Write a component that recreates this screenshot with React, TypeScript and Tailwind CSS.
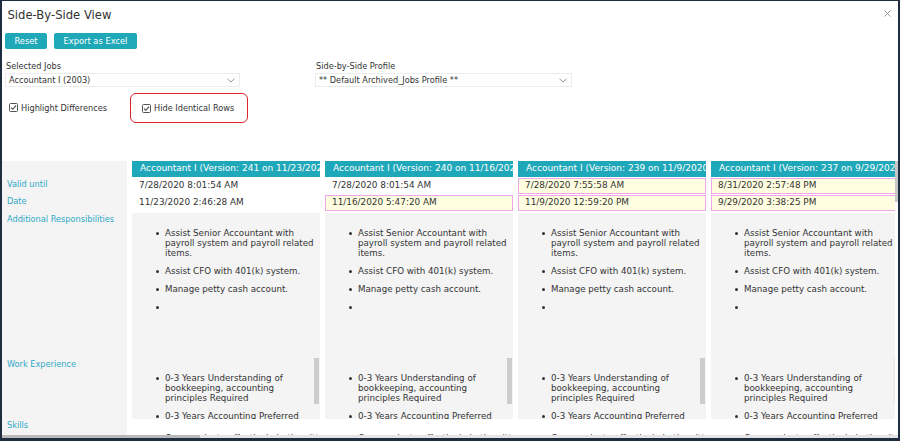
import React from "react";

type Cell = { text: string; diff: boolean };
type Column = { title: string; valid: Cell; date: Cell };

const columns: Column[] = [
  {
    title: "Accountant I (Version: 241 on 11/23/2020)",
    valid: { text: "7/28/2020 8:01:54 AM", diff: false },
    date: { text: "11/23/2020 2:46:28 AM", diff: false },
  },
  {
    title: "Accountant I (Version: 240 on 11/16/2020)",
    valid: { text: "7/28/2020 8:01:54 AM", diff: false },
    date: { text: "11/16/2020 5:47:20 AM", diff: true },
  },
  {
    title: "Accountant I (Version: 239 on 11/9/2020)",
    valid: { text: "7/28/2020 7:55:58 AM", diff: true },
    date: { text: "11/9/2020 12:59:20 PM", diff: true },
  },
  {
    title: "Accountant I (Version: 237 on 9/29/2020)",
    valid: { text: "8/31/2020 2:57:48 PM", diff: true },
    date: { text: "9/29/2020 3:38:25 PM", diff: true },
  },
];

// each item is split into its display lines
const responsibilities = [
  ["Assist Senior Accountant with", "payroll system and payroll related", "items."],
  ["Assist CFO with 401(k) system."],
  ["Manage petty cash account."],
  [""],
];

const experience = [
  ["0-3 Years Understanding of", "bookkeeping, accounting", "principles Required"],
  ["0-3 Years Accounting Preferred"],
];

const skills = [["Communicate effectively both written"]];

function Chevron() {
  return (
    <svg width="8" height="5" viewBox="0 0 8 5" className="shrink-0">
      <path d="M0.5 0.8 L4 4 L7.5 0.8" fill="none" stroke="#8a8a8a" strokeWidth="0.9" />
    </svg>
  );
}

function CheckBox() {
  return (
    <svg width="9" height="9" viewBox="0 0 9 9" className="shrink-0">
      <rect x="0.5" y="0.5" width="8" height="8" rx="1" fill="#fff" stroke="#555" strokeWidth="1" />
      <path d="M2 4.6 L3.8 6.3 L7 2.6" fill="none" stroke="#444" strokeWidth="1.1" />
    </svg>
  );
}

function Bullets({ items, top }: { items: string[][]; top: string }) {
  return (
    <ul className={`flex flex-col gap-[8px] ${top}`}>
      {items.map((lines, i) => (
        <li key={i} className="flex items-start text-[8.7px] leading-[10px] text-[#333]">
          <span className="ml-[24px] mt-[4px] h-[2.5px] w-[2.5px] shrink-0 rounded-full bg-[#333]" />
          <span className="ml-[6.5px] flex min-h-[10px] flex-col whitespace-nowrap">
            {lines.map((line, j) => (
              <span key={j}>{line}</span>
            ))}
          </span>
        </li>
      ))}
    </ul>
  );
}

function ValueRow({ cell }: { cell: Cell }) {
  return (
    <div
      className={`mt-[1px] flex h-[16px] shrink-0 items-center whitespace-nowrap text-[8.9px] ${
        cell.diff ? "border border-[#f2a6ea] bg-[#fffee0] pl-[6px]" : "bg-white pl-[7px]"
      }`}
    >
      {cell.text}
    </div>
  );
}

function VersionColumn({ column, thumb }: { column: Column; thumb: string }) {
  return (
    <div className="flex w-[188px] shrink-0 flex-col text-[#333]">
      <div className="flex h-[16px] shrink-0 items-center overflow-hidden whitespace-nowrap bg-[#1fa8b9] pl-[8px] text-[9px] text-white">
        {column.title}
      </div>
      <ValueRow cell={column.valid} />
      <ValueRow cell={column.date} />
      <div className="mt-[2px] shrink-0 bg-[#f4f4f4]">
        <div className="h-[145px] overflow-hidden">
          <Bullets items={responsibilities} top="pt-[15px]" />
        </div>
        <div className="relative h-[61px] overflow-hidden">
          <Bullets items={experience} top="pt-[15px]" />
          <div className={`absolute right-[1px] top-0 h-[46px] w-[5px] ${thumb}`} />
        </div>
      </div>
      <div className="min-h-0 flex-1 overflow-hidden bg-white">
        <Bullets items={skills} top="pt-[14px]" />
      </div>
    </div>
  );
}

export default function App() {
  return (
    <div className="h-[441px] w-[900px] overflow-hidden bg-[#202d40] pb-[3px] pl-[2px] pr-[2px] pt-[1px] font-['DejaVu_Sans',Verdana,sans-serif] text-[8.2px]">
      <div className="flex h-full w-full flex-col bg-white">
        {/* top section */}
        <div className="relative h-[160px] shrink-0 pl-[3px] text-[#333]">
          <div className="h-[22px] pl-[2.5px] pt-[7px] text-[11.6px] leading-[14px] text-[#333]">
            Side-By-Side View
          </div>
          <button
            type="button"
            className="absolute right-[6px] top-[8px] flex h-[9px] w-[9px] items-center justify-center"
          >
            <svg width="7" height="7" viewBox="0 0 7 7">
              <path d="M0.5 0.5 L6.5 6.5 M6.5 0.5 L0.5 6.5" stroke="#8a8a8a" strokeWidth="0.9" />
            </svg>
          </button>
          <div className="mt-[10px] flex gap-[7px]">
            <button type="button" className="h-[16px] w-[42px] rounded-[2px] bg-[#1fa8b7] text-[8.3px] text-white">
              Reset
            </button>
            <button type="button" className="h-[16px] w-[83px] rounded-[2px] bg-[#1fa8b7] text-[8.3px] text-white">
              Export as Excel
            </button>
          </div>
          <div className="mt-[11px] flex">
            <div className="w-[310px]">
              <div className="h-[13px] pl-[1px] leading-[13px]">Selected Jobs</div>
              <div className="flex h-[14px] w-[235px] items-center justify-between border border-[#ececec] pl-[3px] pr-[4px]">
                <span>Accountant I (2003)</span>
                <Chevron />
              </div>
            </div>
            <div>
              <div className="h-[13px] pl-[1px] leading-[13px]">Side-by-Side Profile</div>
              <div className="flex h-[14px] w-[257px] items-center justify-between border border-[#ececec] pl-[3px] pr-[4px]">
                <span>** Default Archived_Jobs Profile **</span>
                <Chevron />
              </div>
            </div>
          </div>
          <div className="mt-[6px] flex items-center">
            <label className="flex w-[125px] items-center gap-[3px] pl-[4px]">
              <CheckBox />
              <span>Highlight Differences</span>
            </label>
            <label className="flex h-[30px] w-[118px] items-center gap-[3px] rounded-[6px] border-[1.5px] border-[#e0262b] pl-[11px]">
              <CheckBox />
              <span>Hide Identical Rows</span>
            </label>
          </div>
        </div>

        {/* comparison grid */}
        <div className="flex min-h-0 flex-1">
          <div className="flex min-w-0 flex-1 gap-[5px] overflow-hidden">
            <div className="flex w-[125px] shrink-0 flex-col bg-[#f4f4f4] pl-[5px] leading-[10px] text-[#2fa9c6]">
              <div className="h-[17px] shrink-0" />
              <div className="h-[17px] shrink-0 pt-[1px]">Valid until</div>
              <div className="h-[18px] shrink-0 pt-[1px]">Date</div>
              <div className="h-[145px] shrink-0 pt-[1px]">Additional Responsibilities</div>
              <div className="h-[61px] shrink-0 pt-[1px]">Work Experience</div>
              <div className="shrink-0 pt-[1px]">Skills</div>
            </div>
            <VersionColumn column={columns[0]} thumb="bg-[#cdcdcd]" />
            <VersionColumn column={columns[1]} thumb="bg-[#cdcdcd]" />
            <VersionColumn column={columns[2]} thumb="bg-[#cdcdcd]" />
            <VersionColumn column={columns[3]} thumb="bg-[#ececec]" />
          </div>
          <div className="w-[3px] shrink-0 bg-white">
            <div className="h-[41px] bg-[#c6c6c6]" />
          </div>
        </div>
        <div className="flex h-[3px] shrink-0 bg-[#e4e4e4]">
          <div className="w-[198px] bg-[#b9b9b9]" />
        </div>
      </div>
    </div>
  );
}
